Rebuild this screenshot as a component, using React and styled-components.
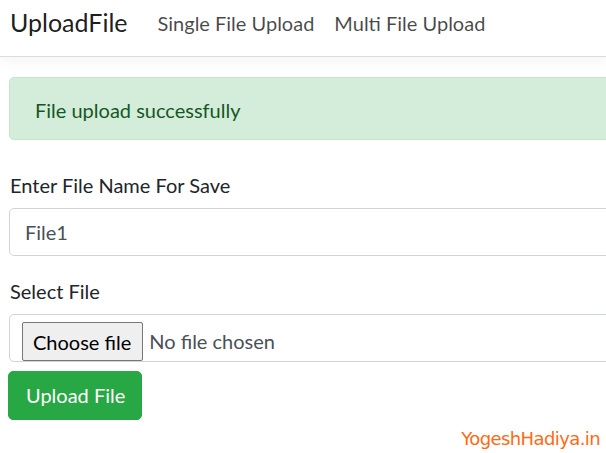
import React from 'react';
import styled, { createGlobalStyle } from 'styled-components';

const GlobalStyle = createGlobalStyle`
  html, body {
    margin: 0;
    padding: 0;
    background: #fff;
    overflow: hidden;
  }
  body {
    font-family: "Lato", "Open Sans", sans-serif;
    font-size: 20px;
    line-height: 30px;
    color: #212529;
  }
  * { box-sizing: border-box; }
`;

const Navbar = styled.nav`
  display: flex;
  align-items: center;
  height: 57px;
  padding: 0 10px 11px;
  border-bottom: 1px solid #dcdcdc;
  box-shadow: 0 6px 14px rgba(0, 0, 0, 0.04);
`;

const Brand = styled.a`
  font-size: 25px;
  line-height: 37px;
  color: rgba(0, 0, 0, 0.9);
  margin-right: 20px;
  text-decoration: none;
`;

const NavLink = styled.a`
  padding: 0 10px;
  font-size: 20px;
  color: rgba(0, 0, 0, 0.72);
  text-decoration: none;
`;

const Main = styled.main`
  width: 640px;
  padding: 20px 0 0 9px;
`;

const Alert = styled.div`
  padding: 17px 25px 13px;
  height: 63px;
  background: #d4edda;
  border: 1px solid #c3e6cb;
  border-radius: 5px;
  color: #155724;
  margin-bottom: 30px;
`;

const FormGroup = styled.div`
  margin-bottom: ${p => p.$mb || 20}px;
`;

const Label = styled.label`
  display: block;
  margin: 0 0 8px 1px;
`;

const Field = styled.div`
  display: flex;
  align-items: center;
  height: 48px;
  padding: 0 15px;
  border: 1px solid #ced4da;
  border-radius: 5px;
  color: #495057;
  background: #fff;
`;

const FileField = styled(Field)`
  align-items: flex-end;
  padding: 0 0 0 12px;
`;

const ChooseButton = styled.span`
  display: inline-flex;
  align-items: center;
  height: 39px;
  padding: 0 11px 0 10px;
  margin-right: 6px;
  background: #efefef;
  border: 1px solid #767676;
  border-radius: 2px;
  color: #000;
`;

const FileName = styled.span`
  line-height: 40px;
`;

const Submit = styled.button`
  font-family: inherit;
  font-size: 20px;
  line-height: 30px;
  padding: 8px 16px 9px 17px;
  margin-left: -1px;
  border: 1px solid #28a745;
  border-radius: 5px;
  background: #28a745;
  color: #fff;
`;

const Footer = styled.div`
  display: flex;
  justify-content: flex-end;
  padding: 4px 6px 0 0;
  width: 606px;
`;

const Watermark = styled.span`
  font-family: "DejaVu Sans", sans-serif;
  font-size: 18px;
  color: #ff6a13;
  letter-spacing: -0.6px;
`;

export default function App() {
  return (
    <>
      <GlobalStyle />
      <Navbar>
        <Brand href="#">UploadFile</Brand>
        <NavLink href="#">Single File Upload</NavLink>
        <NavLink href="#">Multi File Upload</NavLink>
      </Navbar>
      <Main>
        <Alert>File upload successfully</Alert>
        <FormGroup>
          <Label>Enter File Name For Save</Label>
          <Field>File1</Field>
        </FormGroup>
        <FormGroup $mb={9}>
          <Label>Select File</Label>
          <FileField>
            <ChooseButton>Choose file</ChooseButton>
            <FileName>No file chosen</FileName>
          </FileField>
        </FormGroup>
        <Submit type="button">Upload File</Submit>
      </Main>
      <Footer>
        <Watermark>YogeshHadiya.in</Watermark>
      </Footer>
    </>
  );
}
